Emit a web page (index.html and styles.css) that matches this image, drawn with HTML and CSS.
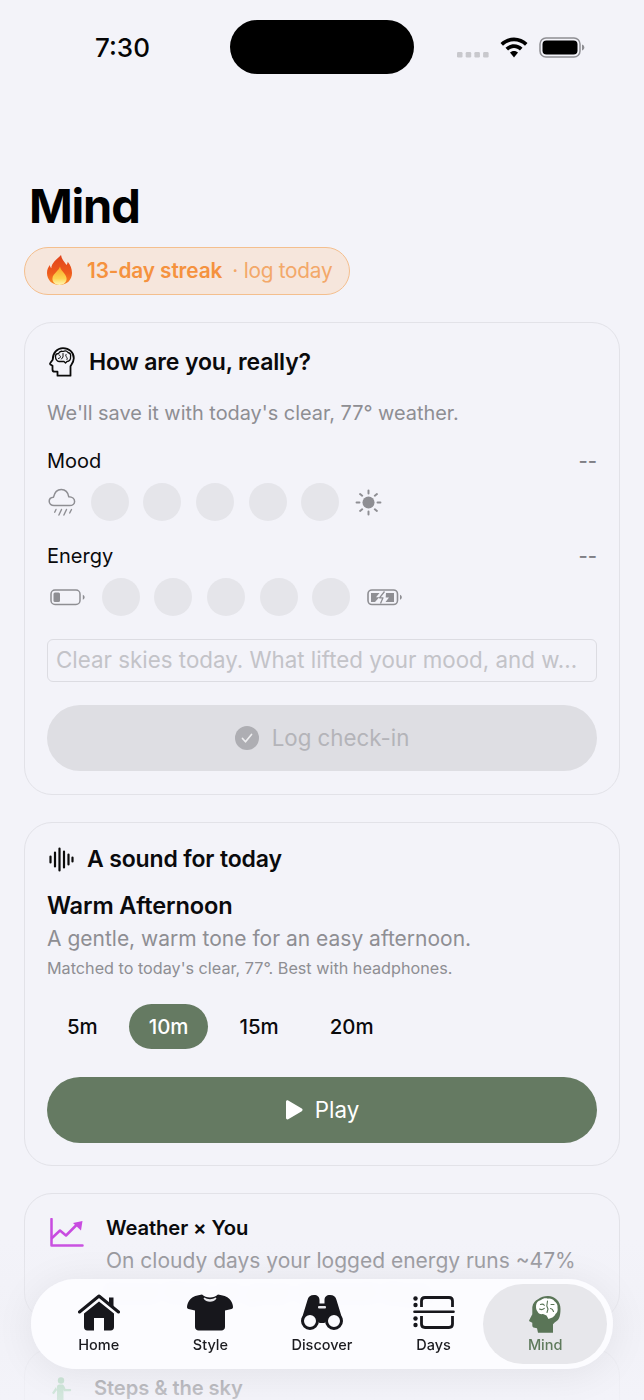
FILE: index.html
```html
<!DOCTYPE html>
<html lang="en">
<head>
<meta charset="utf-8">
<title>Mind</title>
<link rel="stylesheet" href="styles.css">
</head>
<body>
<div class="screen">
  <header class="status">
    <span class="time">7:30</span>
    <div class="island"></div>
    <div class="status-right">
      <svg class="sig" width="32" height="6" viewBox="0 0 32 6"><rect x="0" y="0" width="5.5" height="5.5" rx="1.2"/><rect x="8.7" y="0" width="5.5" height="5.5" rx="1.2"/><rect x="17.4" y="0" width="5.5" height="5.5" rx="1.2"/><rect x="26.1" y="0" width="5.5" height="5.5" rx="1.2"/></svg>
      <svg class="wifi" width="28" height="21" viewBox="0 0 28 21"><path d="M14 0.5C8.7 0.5 4 2.6 0.5 6L3 8.7C5.9 5.9 9.8 4.2 14 4.2s8.100 1.700 11 4.500L27.500 6C24 2.600 19.300 0.500 14 0.500z"/><path d="M14 7.300c-3.300 0-6.300 1.300-8.500 3.400l2.600 2.700c1.500-1.500 3.600-2.400 5.900-2.400s4.400 0.900 5.900 2.400l2.600-2.700C20.300 8.600 17.300 7.300 14 7.300z"/><path d="M14 14c-1.600 0-3 0.600-4 1.600L14 20.500l4-4.900C17 14.600 15.600 14 14 14z"/></svg>
      <svg class="batt" width="46" height="21" viewBox="0 0 46 21"><rect x="1" y="1" width="40" height="19" rx="6" fill="none" stroke="#8e8e93" stroke-width="1.500"/><rect x="3.500" y="3.500" width="35" height="14" rx="4" fill="#000"/><path d="M43 7.500c1.500.4 2.300 1.600 2.300 3s-.8 2.600-2.300 3z" fill="#8e8e93"/></svg>
    </div>
  </header>

  <h1 class="page-title">Mind</h1>

  <div class="streak">
    <svg class="flame" width="25" height="30" viewBox="0 0 25 30">
      <defs>
        <linearGradient id="fl" x1="0" y1="0" x2="0" y2="1"><stop offset="0" stop-color="#e0431c"/><stop offset=".6" stop-color="#ee5a1c"/><stop offset="1" stop-color="#f88a20"/></linearGradient>
        <linearGradient id="fi" x1="0" y1="0" x2="0" y2="1"><stop offset="0" stop-color="#f9a426"/><stop offset=".65" stop-color="#fdd452"/><stop offset="1" stop-color="#fff6b8"/></linearGradient>
      </defs>
      <path d="M14 0c.5 4 3.200 6.500 5.500 10c.8-.9 1.100-2 1.200-3.200C23.500 10 25 14 25 18C25 25 19.800 30 12.500 30S0 25 0 18c0-3.400 1.300-5.800 2.800-8c.2 1.400.6 2.400 1.500 3.200C4.500 8 9.500 4.500 14 0z" fill="url(#fl)"/>
      <path d="M13 11.500c.5 3 2.500 4.500 4.300 7c1.600 2.200 2.300 3.800 2.300 5.300c0 3.500-3.100 6.200-7.100 6.200s-7.100-2.700-7.100-6.200c0-3.300 2.300-4.800 4.200-7.200c1.500-1.700 2.900-3.200 3.400-5.100z" fill="url(#fi)"/>
    </svg>
    <span class="streak-main">13-day streak</span>
    <span class="streak-sub">· log today</span>
  </div>

  <section class="card card-checkin">
    <div class="card-head">
      <svg class="head-icon" width="26" height="30" viewBox="0 0 26 30" fill="none" stroke="#0a0a0a" stroke-width="1.800" stroke-linejoin="round" stroke-linecap="round">
        <path d="M14 1.200c6 0 10.800 4 10.800 10c0 3.800-2 6-3.300 8v9.500H8.500v-4H5.800c-1.500 0-2.300-1-2.300-2.300v-3.600L1.400 17.500c-.5-.4-.5-1-.1-1.500l2.400-3.300C3.800 6 8 1.200 14 1.200z"/>
        <path d="M6.500 9.500C6.500 7.500 8 6.500 9.500 6.500C10.500 4.500 12.500 4 14 4.500C16 3.500 18 4 19 5.500C21 6 22 8 21.500 10C22 12 20.500 14.500 18 14.500L16.500 16L15 14.500H10C8 14.500 6.500 12 6.500 9.500z" stroke-width="1.300"/>
        <path d="M10 8c1 .3 1.500 1 1.500 1.800S10.500 11.500 9.500 11.500M14 6.500v3.500l-1.500 2M17 7.500c-.5 1-.3 2 .5 2.500s1 1.500.5 2.500" stroke-width="1"/>
      </svg>
      <h2 class="card-title">How are you, really?</h2>
    </div>
    <p class="note">We'll save it with today's clear, 77° weather.</p>

    <div class="scale-label scale-mood"><span>Mood</span><span class="dash">--</span></div>
    <div class="scale">
      <span class="end end-small">
        <svg width="28" height="29" viewBox="0 0 28 29" fill="none" stroke="#8e8e93" stroke-width="1.500" stroke-linecap="round" stroke-linejoin="round">
          <path d="M7.500 17.500H6c-2.700 0-4.800-1.700-4.800-4.200c0-2.300 1.800-4 4.300-4.100C6.500 4.600 9.500 1.500 13.300 1.500c3.700 0 6.700 2.900 7.500 7.300c3.300.1 5.800 2.100 5.800 4.600c0 2.400-2.200 4.100-4.800 4.100z"/>
          <path d="M8 21.500l-1.300 2.700M13.500 21.500l-2.600 5.500M18.500 21.500l-2.600 5.500M23.500 21.500l-1.800 3.500" stroke-width="1.400"/>
        </svg>
      </span>
      <span class="dot"></span><span class="dot"></span><span class="dot"></span><span class="dot"></span><span class="dot"></span>
      <span class="end end-small">
        <svg width="27" height="27" viewBox="0 0 26 26" fill="none" stroke="#8e8e93" stroke-width="1.900" stroke-linecap="round">
          <circle cx="13" cy="13" r="5.800" fill="#8e8e93" stroke="none"/>
          <path d="M13 1.500v2.800M13 21.700v2.800M1.500 13h2.800M21.700 13h2.800M4.900 4.900l2 1.600M19.100 19.500l2 1.600M21.100 4.900l-2 1.600M6.900 19.500l-2 1.600"/>
        </svg>
      </span>
    </div>

    <div class="scale-label scale-energy"><span>Energy</span><span class="dash">--</span></div>
    <div class="scale">
      <span class="end end-wide">
        <svg width="36" height="17" viewBox="0 0 36 17" fill="none">
          <rect x="1" y="1" width="29" height="14.500" rx="4" stroke="#8e8e93" stroke-width="1.500"/>
          <rect x="3.500" y="3.500" width="6.500" height="9.500" rx="1.500" fill="#8e8e93"/>
          <path d="M32.800 5.800c1.200.4 1.800 1.400 1.800 2.500s-.6 2.100-1.800 2.500z" fill="#8e8e93"/>
        </svg>
      </span>
      <span class="dot"></span><span class="dot"></span><span class="dot"></span><span class="dot"></span><span class="dot"></span>
      <span class="end end-wide end-right">
        <svg width="36" height="17" viewBox="0 0 36 17">
          <rect x="1" y="1" width="29.500" height="14.500" rx="4" fill="none" stroke="#8e8e93" stroke-width="1.600"/>
          <path d="M4 4h8.500l-3.500 4.200h3.300L8 13H4z" fill="#8e8e93"/>
          <path d="M19 4h8v9h-8.500l3.500-4.500h-3.300z" fill="#8e8e93"/>
          <path d="M17.500 2.500l-5 6.300h3.500l-2.500 5.700" fill="none" stroke="#8e8e93" stroke-width="1.300" stroke-linejoin="round"/>
          <path d="M33 5.800c1.200.4 1.800 1.400 1.800 2.500s-.6 2.100-1.800 2.500z" fill="#8e8e93"/>
        </svg>
      </span>
    </div>

    <div class="field">Clear skies today. What lifted your mood, and w...</div>

    <div class="btn btn-off">
      <svg width="24" height="24" viewBox="0 0 24 24"><circle cx="12" cy="12" r="12" fill="#aeaeb3"/><path d="M7.500 12.500l3 3.300l6-7.300" fill="none" stroke="#eeeef0" stroke-width="1.700" stroke-linecap="round" stroke-linejoin="round"/></svg>
      <span>Log check-in</span>
    </div>
  </section>

  <section class="card card-sound">
    <div class="card-head card-head-sound">
      <svg class="wave" width="25" height="25" viewBox="0 0 25 25" stroke="#0a0a0a" stroke-width="2.200" stroke-linecap="round"><path d="M1.500 9.500v6M6 5.500v14M10.500 1.500v22M15 4.500v16M19.500 7.500v10M23.500 10.500v4"/></svg>
      <h2 class="card-title">A sound for today</h2>
    </div>
    <h3 class="track">Warm Afternoon</h3>
    <p class="track-desc">A gentle, warm tone for an easy afternoon.</p>
    <p class="track-meta">Matched to today's clear, 77°. Best with headphones.</p>
    <div class="chips">
      <span class="chip">5m</span>
      <span class="chip chip-on">10m</span>
      <span class="chip">15m</span>
      <span class="chip">20m</span>
    </div>
    <div class="btn btn-play">
      <svg width="18" height="20" viewBox="0 0 18 20"><path d="M1 1.800C1 .6 2.200 0 3.200.6l13.600 8c1 .6 1 2 0 2.600l-13.600 8C2.200 19.800 1 19.200 1 18z" fill="#fff"/></svg>
      <span>Play</span>
    </div>
  </section>

  <section class="card card-insight">
    <div class="insight">
      <svg class="insight-icon" width="34" height="29" viewBox="0 0 34 29" fill="none" stroke="#c84be0" stroke-width="2.500" stroke-linecap="round" stroke-linejoin="round">
        <path d="M1.500 1v26.500h31"/>
        <path d="M2 20l8-7.500l6 5l11-11"/>
        <path d="M32.500 3L31 12.500L23 5z" fill="#c84be0" stroke="none"/>
      </svg>
      <div>
        <h4 class="insight-title">Weather × You</h4>
        <p class="insight-text">On cloudy days your logged energy runs ~47%<br>lower than on your clearest days.</p>
      </div>
    </div>
  </section>

  <section class="card card-steps">
    <div class="insight">
      <svg class="steps-icon" width="20" height="26" viewBox="0 0 20 26" fill="#5cb974">
        <circle cx="9" cy="3.500" r="3.200"/>
        <path d="M5 9.500c0-1 1-2 2.500-2H10c1 0 1.800.6 2.200 1.500l1.300 3h4.500c1.500 0 1.500 2.300 0 2.300h-6l-.5-1.500V26H5z"/>
        <path d="M4 10L0 16l1.800 1.300L5 13z"/>
      </svg>
      <h4 class="steps-title">Steps &amp; the sky</h4>
    </div>
  </section>

  <div class="fade"></div>

  <nav class="tabbar">
    <div class="tab">
      <svg width="42" height="37" viewBox="0 0 42 37">
        <path d="M1.500 18L21 2l19.500 16" fill="none" stroke="#17171c" stroke-width="3" stroke-linecap="round" stroke-linejoin="round"/>
        <path d="M31 3.500h4.500V13L31 9.500z" fill="#17171c"/>
        <path d="M21 7.500L6 19.500V33c0 2 1.200 3.500 3.300 3.500h23.400c2.100 0 3.300-1.500 3.300-3.500V19.500zM16 24h10v12.500H16z" fill="#17171c" fill-rule="evenodd"/>
      </svg>
      <span class="tab-label">Home</span>
    </div>
    <div class="tab">
      <svg width="46" height="37" viewBox="0 0 46 37">
        <path d="M15 .5C17 2.500 20 3.500 23 3.500S29 2.500 31 .5c5 .8 9 2 11.500 4.500c2 2 3.500 5.500 3.500 8c0 1-.5 1.700-1.500 2l-6.500 1.500V33c0 2.300-1.700 3.500-3.500 3.500h-23c-1.800 0-3.500-1.200-3.500-3.500V16.500L1.500 15C.5 14.700 0 14 0 13c0-2.500 1.500-6 3.500-8C6 2.500 10 1.300 15 .5z" fill="#17171c"/>
        <path d="M17.500 3.500c1.500 1 3.500 1.700 5.500 1.700s4-.7 5.500-1.700l1 1c-1.600 2.300-3.800 3.300-6.500 3.300s-4.900-1-6.500-3.300z" fill="#e8e8ec"/>
      </svg>
      <span class="tab-label">Style</span>
    </div>
    <div class="tab">
      <svg width="46" height="37" viewBox="0 0 46 37">
        <path d="M8.500 6c.8-3.500 3-5 6.500-5s5.500 2 5.500 5v3.500h5V6c0-3 2-5 5.500-5s5.700 1.500 6.500 5l5.500 18H35c-4 0-8 2-9.500 5h-5C19 26 15 24 11 24H3z" fill="#17171c"/>
        <rect x="19" y="12" width="8" height="2.500" rx="1" fill="#e8e8ec"/>
        <circle cx="11" cy="27" r="7.500" fill="#fbfbfe" stroke="#17171c" stroke-width="3"/>
        <circle cx="35" cy="27" r="7.500" fill="#fbfbfe" stroke="#17171c" stroke-width="3"/>
      </svg>
      <span class="tab-label">Discover</span>
    </div>
    <div class="tab">
      <svg width="42" height="33" viewBox="0 0 42 33" class="days-icon">
        <g fill="#17171c"><circle cx="2.500" cy="2.500" r="2.200"/><circle cx="2.500" cy="9" r="2.200"/><circle cx="2.500" cy="22.500" r="2.200"/><circle cx="2.500" cy="29" r="2.200"/></g>
        <path d="M1.500 15.800h39" stroke="#17171c" stroke-width="2.600" stroke-linecap="round"/>
        <path d="M8.500 11V5c0-2.200 1.300-3.500 3.500-3.500h24c2.200 0 3.500 1.300 3.500 3.500v6M8.500 20v8c0 2.200 1.300 3.500 3.500 3.500h24c2.200 0 3.500-1.300 3.500-3.500v-8" fill="none" stroke="#17171c" stroke-width="2.800"/>
      </svg>
      <span class="tab-label">Days</span>
    </div>
    <div class="tab tab-on">
      <svg width="32" height="37" viewBox="0 0 32 37" class="mind-icon">
        <path d="M19 0C26 0 31.500 5.500 31.500 13c0 4-.5 7-1.500 9.300c-1 2.500-4 3.500-6 6V36.700H9L8 32.300L4.500 31.500C3.500 31 3.300 30 3.300 29V26.700L.8 25.500C0 25 0 24.500.3 24L3.300 18.300V11C4 7 6 5 9 3.300C12 1 15 0 19 0z" fill="#5a7557"/>
        <path d="M7.500 7.500C8.500 5 10.500 4.500 12 4C14 2.200 16.500 1.800 19 2.700C21.500 2.200 24 3.200 25.500 5.200C27.500 6.500 29 9 28.500 11.500C29 14 28.500 16.800 26.500 18C25.500 20 24 21.500 22 22L19.500 23L17.500 19.500L14 18C11.500 18.500 9 17.500 8.500 15.500C7 14 6.500 10 7.500 7.500z" fill="#fff"/>
        <g fill="none" stroke="#5a7557" stroke-width="1.100" stroke-linecap="round" stroke-linejoin="round">
          <path d="M11.500 8.500c1.500-.7 3-.3 3.800.8M10.500 13c1.500.8 3.500.6 4.800-.7"/>
          <path d="M18.500 5l-.7 5l1.200 3l-1 3.500"/>
          <path d="M22 8.500h3M21.500 12.500c1.500.3 2.500 1.300 3 3"/>
        </g>
      </svg>
      <span class="tab-label">Mind</span>
    </div>
  </nav>
</div>
</body>
</html>
```
FILE: styles.css
```css
* { box-sizing: border-box; }
html, body { margin: 0; padding: 0; }
body {
  background: #f3f3f9;
  font-family: Inter, "Noto Sans", "Liberation Sans", sans-serif;
  color: #0a0a0c;
}
h1, h2, h3, h4, p { margin: 0; }

.screen {
  position: relative;
  width: 644px;
  height: 1400px;
  overflow: hidden;
  padding: 0 24px;
}

.status { height: 94px; }
.time {
  position: absolute;
  left: 95px;
  top: 32px;
  font-size: 26px;
  line-height: 32px;
  font-weight: 500;
  color: #050505;
}
.island {
  position: absolute;
  left: 230px;
  top: 20px;
  width: 184px;
  height: 54px;
  border-radius: 27px;
  background: #000;
}
.status-right {
  position: absolute;
  left: 457px;
  top: 37px;
  display: flex;
  align-items: flex-start;
}
.sig { fill: #c8c8cd; margin-top: 15px; margin-right: 11px; }
.wifi { fill: #000; margin-right: 11px; }

.page-title {
  margin-top: 84px;
  padding-left: 5px;
  font-size: 47px;
  line-height: 56px;
  font-weight: 700;
  letter-spacing: -1.200px;
  color: #000;
}

.streak {
  margin-top: 13px;
  width: 326px;
  height: 48px;
  display: flex;
  align-items: center;
  padding: 0 0 2px 22px;
  border: 1px solid #f4bf8e;
  border-radius: 24px;
  background: #f6e6dc;
  color: #f5923e;
  font-size: 20.800px;
}
.flame { flex: none; margin-right: 15px; }
.streak-main { font-weight: 600; letter-spacing: -.1px; }
.streak-sub { margin-left: 10px; color: #f3a869; font-weight: 400; letter-spacing: -.25px; }

.card {
  border: 1px solid #e2e2e8;
  border-radius: 28px;
  padding: 0 22px;
}
.card-checkin { margin-top: 27px; height: 473px; padding-top: 23px; }
.card-sound { margin-top: 27px; height: 344px; padding-top: 20px; }
.card-insight { margin-top: 27px; height: 128px; padding: 20px 0 0 25px; }
.card-steps { margin-top: 27px; height: 100px; padding: 28px 0 0 27px; }

.card-head { display: flex; align-items: center; height: 32px; }
.head-icon { margin-left: 2px; margin-right: 14px; }
.card-title { font-size: 23px; line-height: 32px; font-weight: 600; letter-spacing: -.15px; }
.card-head-sound { height: 32px; }
.wave { margin-left: 2px; margin-right: 13px; }

.note {
  margin-top: 22px;
  font-size: 19.900px;
  line-height: 26px;
  color: #8e8e93;
}

.scale-label {
  display: flex;
  justify-content: space-between;
  font-size: 20px;
  line-height: 26px;
  color: #0a0a0c;
}
.scale-mood { margin-top: 22px; }
.scale-energy { margin-top: 22px; }
.dash { color: #7f7f85; font-weight: 500; }

.scale {
  margin-top: 9px;
  display: flex;
  align-items: center;
  gap: 14.700px;
  height: 38px;
}
.dot {
  flex: none;
  width: 38px;
  height: 38px;
  border-radius: 50%;
  background: #e5e5ea;
}
.end { display: flex; align-items: center; flex: none; }
.end-small { width: 29px; padding-left: 1px; }
.end-wide { width: 40px; padding-left: 3px; }
.end-right { padding-left: 2px; }

.field {
  margin-top: 23px;
  height: 43px;
  padding-left: 8px;
  border: 1px solid #dcdce2;
  border-radius: 6px;
  font-size: 22.350px;
  line-height: 40px;
  color: #c3c3c8;
  white-space: nowrap;
  overflow: hidden;
}

.btn {
  display: flex;
  align-items: center;
  justify-content: center;
  height: 66px;
  border-radius: 33px;
  font-size: 22.300px;
}
.btn-off {
  margin-top: 23px;
  gap: 13px;
  background: #dedee3;
  color: #b4b4b9;
}
.btn-play {
  margin-top: 28px;
  gap: 12px;
  background: #657a62;
  color: #fff;
}
.btn span { position: relative; top: -1px; }

.track { margin-top: 16px; font-size: 23.600px; line-height: 30px; font-weight: 600; letter-spacing: -.15px; }
.track-desc { margin-top: 4px; font-size: 21px; line-height: 28px; color: #8e8e93; }
.track-meta { margin-top: 5px; font-size: 16.200px; line-height: 20px; color: #8e8e93; }

.chips { margin-top: 26px; display: flex; gap: 11px; }
.chip {
  height: 45px;
  padding: 0 20px;
  border-radius: 22.500px;
  font-size: 20.400px;
  font-weight: 500;
  line-height: 45px;
}
.chip-on { background: #657a62; color: #fff; }

.insight { display: flex; align-items: flex-start; gap: 22px; }
.insight-icon { flex: none; margin-top: 4px; }
.steps-icon { flex: none; }
.insight-title { font-size: 20.200px; line-height: 28px; font-weight: 600; letter-spacing: -.1px; }
.insight-text { margin-top: 3px; font-size: 21px; line-height: 32px; color: #8e8e93; white-space: nowrap; }
.steps-title { font-size: 20.200px; line-height: 22px; font-weight: 600; letter-spacing: -.1px; color: #0a0a0c; }

.fade {
  position: absolute;
  left: 0;
  right: 0;
  top: 1240px;
  height: 160px;
  background: linear-gradient(to bottom, rgba(242,242,248,0) 0%, rgba(240,240,246,.55) 45%, rgba(243,243,249,.8) 100%);
}

.tabbar {
  position: absolute;
  left: 31px;
  top: 1279px;
  width: 582px;
  height: 90px;
  padding: 5px 12px;
  display: grid;
  grid-template-columns: repeat(5, 1fr);
  border-radius: 45px;
  background: rgba(252,252,255,.95);
  backdrop-filter: blur(6px);
  box-shadow: 0 4px 40px rgba(0,0,0,.07);
}
.tab {
  display: flex;
  flex-direction: column;
  align-items: center;
  justify-content: flex-end;
  padding-bottom: 10px;
  border-radius: 40px;
}
.tab svg { margin-bottom: 4px; }
.tab-label { font-size: 14.500px; line-height: 19px; font-weight: 500; color: #1c1c20; }
.tab-on { margin: 0 -6px; background: #e7e7eb; }
.tab-on .tab-label { color: #5f7a5c; }
.tab svg.days-icon { margin-bottom: 6px; }
.tab svg.mind-icon { margin-bottom: 2px; }
```
